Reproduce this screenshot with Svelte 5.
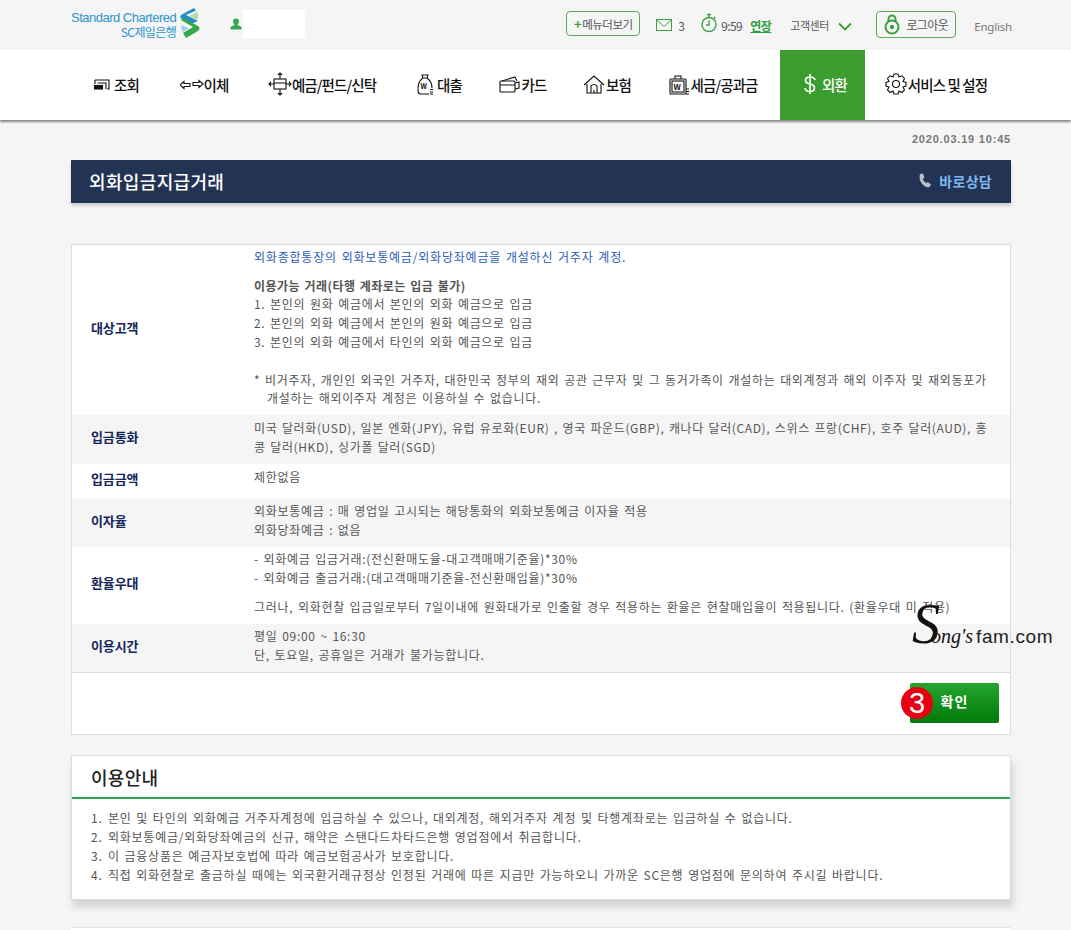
<script>
  const navItems = [
    { label: '조회', icon: 'inquiry' },
    { label: '이체', icon: 'transfer' },
    { label: '예금/펀드/신탁', icon: 'deposit' },
    { label: '대출', icon: 'loan' },
    { label: '카드', icon: 'card' },
    { label: '보험', icon: 'house' },
    { label: '세금/공과금', icon: 'tax' },
    { label: '외환', icon: 'dollar', active: true },
    { label: '서비스 및 설정', icon: 'gear' }
  ];

  const guide = [
    '본인 및 타인의 외화예금 거주자계정에 입금하실 수 있으나, 대외계정, 해외거주자 계정 및 타행계좌로는 입금하실 수 없습니다.',
    '외화보통예금/외화당좌예금의 신규, 해약은 스탠다드차타드은행 영업점에서 취급합니다.',
    '이 금융상품은 예금자보호법에 따라 예금보험공사가 보호합니다.',
    '직접 외화현찰로 출금하실 때에는 외국환거래규정상 인정된 거래에 따른 지급만 가능하오니 가까운 SC은행 영업점에 문의하여 주시길 바랍니다.'
  ];
</script>

<div class="page">
  <header class="top">
    <div class="logo">
      <div class="logo-text">
        <span>Standard Chartered</span>
        <span class="logo-kr">SC제일은행</span>
      </div>
      <svg width="20" height="30" viewBox="0 0 20 30">
        <path d="M14 0 L1 7 Q-1 9.5 2 11 L11 16 L18 13 L6 7 L16 2.5 Z" fill="#1f8fc9" />
        <path d="M17 4 L9 8 L17 12 Q20 8 17 4 Z" fill="#b5dca6" />
        <path d="M1 12 L13 19 L3 25 L6 30 L18 23 Q21 20 18 18 L7 12 L3 9.5 Z" fill="#35a94a" />
        <path d="M2 17 L9 20.5 L3 24 Q0 20 2 17 Z" fill="#9fd2ea" />
      </svg>
    </div>
    <svg class="user" width="12" height="12" viewBox="0 0 12 12">
      <circle cx="6" cy="3.5" r="3" fill="#35a94a" />
      <path d="M4.5 5 h3 v2 l4 2 v2.5 h-11 v-2.5 l4 -2 z" fill="#35a94a" />
    </svg>
    <div class="user-name"></div>

    <div class="utils">
      <button class="more"><b>+</b>메뉴더보기</button>
      <svg class="mail" width="16" height="12" viewBox="0 0 16 12" fill="none" stroke="#3d9f45">
        <rect x="0.5" y="0.5" width="15" height="11" />
        <path d="M1 1 L8 7.5 L15 1" />
      </svg>
      <span class="count">3</span>
      <svg class="clock" width="18" height="20" viewBox="0 0 18 20" fill="none" stroke="#3d9f45" stroke-width="1.4">
        <circle cx="9" cy="11.5" r="7" />
        <path d="M9 7.5 V12 H6 M7 1.5 H11 M9 1.5 V4.5 M14 4 L15.5 5.5" />
      </svg>
      <span class="time">9:59</span>
      <span class="extend">연장</span>
      <span class="center">고객센터</span>
      <svg class="chev" width="14" height="9" viewBox="0 0 14 9" fill="none" stroke="#3ba31f" stroke-width="1.8">
        <path d="M1 1.5 L7 7.5 L13 1.5" />
      </svg>
      <button class="logout">
        <svg width="16" height="21" viewBox="0 0 16 21" fill="none" stroke="#3d9f45" stroke-width="2">
          <path d="M4.5 8 V5 a3.5 3.5 0 0 1 7 0 V8" />
          <circle cx="8" cy="13" r="6.5" />
          <circle cx="8" cy="13" r="1.2" fill="#3d9f45" />
        </svg>
        로그아웃
      </button>
      <span class="english">English</span>
    </div>
  </header>

  <nav class="gnb">
    {#each navItems as item}
      <a class="gnb-item" class:active={item.active} href="#top">
        <svg width="24" height="24" viewBox="0 0 24 24" fill="none" stroke="currentColor" stroke-width="1.1">
          {#if item.icon === 'inquiry'}
            <path d="M5 8 H19 V17 H17 M7.5 11 H16 V17" />
            <rect x="4.5" y="13.5" width="8" height="3.5" fill="currentColor" />
            <path d="M5 8 V12" />
          {:else if item.icon === 'transfer'}
            <path d="M0 13 L4 9.5 V11.5 H10 V14.5 H4 V16.5 Z" />
            <path d="M23 12 L19 8.5 V10.5 H13 V13.5 H19 V15.5 Z" />
          {:else if item.icon === 'deposit'}
            <rect x="6" y="7" width="12" height="10" />
            <path d="M6 11 H18 M12 7 V1 M10 3 L12 1 L14 3 M12 17 V23 M10 21 L12 23 L14 21 M6 12 H1 M3 10 L1 12 L3 14 M18 12 H23 M21 10 L23 12 L21 14" />
          {:else if item.icon === 'loan'}
            <path d="M9 3 H15 L14 6 H10 Z" />
            <path d="M10 6 C5 9 5 14 5 19 Q5 22 8 22 H16 M19 16 C19 12 18 9 14 6" />
            <text x="7.5" y="17" font-size="7" font-weight="700" fill="currentColor" stroke="none">W</text>
            <path d="M17 17.5 H20 M17 20 H20 M17 22 H20" />
          {:else if item.icon === 'card'}
            <rect x="2" y="9" width="15" height="11" rx="1" />
            <path d="M2 13 H17 M4 9 L17 5 L19 9 M17 11 L21 10 V16 L17 17" />
          {:else if item.icon === 'house'}
            <path d="M2 13 L12 4 L22 13 M5 12 V21 H19 V12" />
            <path d="M9 21 V14 Q12 11 15 14 V21 M12 18 V21" />
          {:else if item.icon === 'tax'}
            <rect x="3" y="7" width="16" height="15" rx="1" />
            <rect x="5" y="9" width="12" height="11" />
            <path d="M8 7 V4 H14 V7" />
            <text x="6.5" y="17.5" font-size="8" font-weight="700" fill="currentColor" stroke="none">W</text>
            <path d="M19 17 H22 M19 19.5 H22 M19 22 H22" />
          {:else if item.icon === 'dollar'}
            <path d="M17 8 Q16.5 5 12 5 Q7.5 5 7.5 8.5 Q7.5 11 12 12 Q16.5 13 16.5 16 Q16.5 19.5 12 19.5 Q7.5 19.5 7 16 M12 2 V22" stroke-width="1.6" />
          {:else}
            <circle cx="12" cy="12" r="3.5" />
            <path d="M10 2 H14 L15 5 L18 3.8 L20.5 6.5 L19 9.5 L22 10.5 V14 L19 15 L20.5 18 L18 20.5 L15 19 L14 22 H10 L9 19 L6 20.5 L3.5 18 L5 15 L2 14 V10.5 L5 9.5 L3.5 6.5 L6 3.8 L9 5 Z" />
          {/if}
        </svg>
        <span>{item.label}</span>
      </a>
    {/each}
  </nav>

  <main class="content">
    <p class="date">2020.03.19 10:45</p>

    <div class="title-bar">
      <h1>외화입금지급거래</h1>
      <span class="consult">
        <svg width="14" height="15" viewBox="0 0 14 15">
          <path d="M2 1 L5 0.5 L6.5 4.5 L4.8 5.8 Q5.5 8.5 8 10.3 L9.8 9 L13 11.5 L11.5 14 Q7 15 3.5 10 Q0.5 5.5 2 1 Z" fill="#b9c0c9" />
        </svg>
        바로상담
      </span>
    </div>

    <section class="panel">
      <div class="row first">
        <div class="label">대상고객</div>
        <div class="value">
          <p class="blue">외화종합통장의 외화보통예금/외화당좌예금을 개설하신 거주자 계정.</p>
          <p class="sub">이용가능 거래(타행 계좌로는 입금 불가)</p>
          <p>1. 본인의 원화 예금에서 본인의 외화 예금으로 입금</p>
          <p>2. 본인의 외화 예금에서 본인의 원화 예금으로 입금</p>
          <p>3. 본인의 외화 예금에서 타인의 외화 예금으로 입금</p>
          <p class="note">* 비거주자, 개인인 외국인 거주자, 대한민국 정부의 재외 공관 근무자 및 그 동거가족이 개설하는 대외계정과 해외 이주자 및 재외동포가</p>
          <p class="indent">개설하는 해외이주자 계정은 이용하실 수 없습니다.</p>
        </div>
      </div>
      <div class="row gray tall">
        <div class="label">입금통화</div>
        <div class="value">
          <p class="tight">미국 달러화(USD), 일본 엔화(JPY), 유럽 유로화(EUR) , 영국 파운드(GBP), 캐나다 달러(CAD), 스위스 프랑(CHF), 호주 달러(AUD), 홍</p>
          <p class="tight">콩 달러(HKD), 싱가폴 달러(SGD)</p>
        </div>
      </div>
      <div class="row short">
        <div class="label">입금금액</div>
        <div class="value"><p>제한없음</p></div>
      </div>
      <div class="row gray">
        <div class="label">이자율</div>
        <div class="value">
          <p>외화보통예금 : 매 영업일 고시되는 해당통화의 외화보통예금 이자율 적용</p>
          <p>외화당좌예금 : 없음</p>
        </div>
      </div>
      <div class="row rate">
        <div class="label">환율우대</div>
        <div class="value">
          <p>- 외화예금 입금거래:(전신환매도율-대고객매매기준율)*30%</p>
          <p>- 외화예금 출금거래:(대고객매매기준율-전신환매입율)*30%</p>
          <p class="gap">그러나, 외화현찰 입금일로부터 7일이내에 원화대가로 인출할 경우 적용하는 환율은 현찰매입율이 적용됩니다. (환율우대 미 적용)</p>
        </div>
      </div>
      <div class="row gray">
        <div class="label">이용시간</div>
        <div class="value">
          <p>평일 09:00 ~ 16:30</p>
          <p>단, 토요일, 공휴일은 거래가 불가능합니다.</p>
        </div>
      </div>
      <div class="actions">
        <span class="step">3</span>
        <button class="ok">확인</button>
      </div>
    </section>

    <section class="guide">
      <h2>이용안내</h2>
      <ol>
        {#each guide as line, i}
          <li><span class="num">{i + 1}.</span>{line}</li>
        {/each}
      </ol>
    </section>

    <div class="footer-line"></div>
  </main>

  <div class="watermark">
    <i class="sig-s">S</i><i class="sig-rest">ong's</i>
    <span>fam.com</span>
  </div>
</div>

<style>
  :global(body) {
    margin: 0;
    background: #f5f5f5;
  }

  .page {
    position: relative;
    width: 1071px;
    height: 930px;
    overflow: hidden;
    background: #f5f5f5;
    font-family: "Noto Sans CJK KR", "Liberation Sans", sans-serif;
    font-size: 12px;
    color: #555;
  }

  p,
  h1,
  h2,
  ol {
    margin: 0;
    padding: 0;
    font-weight: inherit;
  }

  .top {
    display: flex;
    align-items: center;
    height: 50px;
    padding: 0 59px 0 71px;
    box-sizing: border-box;
  }

  .logo {
    display: flex;
    align-items: center;
    gap: 4px;
    width: 131px;
    height: 50px;
    margin-top: -1px;
    flex: none;
  }

  .logo svg {
    flex: none;
    margin-top: -4px;
  }

  .logo-text {
    display: flex;
    flex-direction: column;
    align-items: flex-end;
    font-family: "Liberation Sans", sans-serif;
    font-size: 13px;
    letter-spacing: -0.5px;
    line-height: 14px;
    color: #2b93cd;
    white-space: nowrap;
  }

  .logo-kr {
    height: 14px;
    font-family: "Noto Sans CJK KR", sans-serif;
    font-size: 12px;
    letter-spacing: -0.6px;
  }

  .user {
    margin: -3px 0 0 28px;
  }

  .user-name {
    width: 62px;
    height: 28px;
    margin: -2px 0 0 1px;
    background: #fff;
  }

  .utils {
    display: flex;
    align-items: center;
    height: 50px;
    margin-left: auto;
    letter-spacing: -0.5px;
    font-size: 11px;
  }

  button {
    font-family: inherit;
    cursor: pointer;
  }

  .more,
  .logout {
    display: flex;
    align-items: center;
    justify-content: center;
    box-sizing: border-box;
    padding: 0;
    background: none;
    border: 1px solid #5fa95f;
    border-radius: 4px;
    color: #555;
    font-size: 11.5px;
    letter-spacing: -0.5px;
  }

  .more {
    width: 74px;
    height: 25px;
    margin-top: -3px;
  }

  .more b {
    color: #3d9f45;
    font-size: 13px;
    margin-right: 1px;
  }

  .mail {
    margin: 0 0 0 16px;
  }

  .count {
    margin-left: 6px;
    width: 8px;
    font-size: 12px;
  }

  .clock {
    margin: -4px 0 0 14px;
  }

  .time {
    margin-left: 3px;
    width: 24px;
    font-size: 12px;
    letter-spacing: -0.6px;
  }

  .extend {
    margin-left: 5px;
    width: 24px;
    color: #2e9e3d;
    font-weight: 700;
    font-size: 12px;
    text-decoration: underline;
  }

  .center {
    margin-left: 16px;
    width: 42px;
  }

  .chev {
    margin: 2px 0 0 6px;
  }

  .logout {
    gap: 6px;
    width: 80px;
    height: 27px;
    margin: -1px 0 0 24px;
    font-size: 12px;
    letter-spacing: -0.6px;
  }

  .english {
    margin: 2px 0 0 18px;
    color: #777;
    font-family: "Noto Sans", sans-serif;
    font-size: 11.5px;
    letter-spacing: -0.2px;
  }

  .gnb {
    display: grid;
    grid-template-columns: 87px 92px 144px 87px 82px 87px 124px 91px 141px;
    height: 70px;
    padding-left: 71px;
    background: #fff;
    box-shadow: 0 2px 2px rgba(0, 0, 0, 0.45);
    position: relative;
  }

  .gnb-item {
    display: flex;
    align-items: center;
    justify-content: center;
    gap: 0;
    padding-bottom: 2px;
    box-sizing: border-box;
    color: #111;
    font-size: 14.5px;
    font-weight: 500;
    letter-spacing: -0.9px;
    text-decoration: none;
    white-space: nowrap;
  }

  .gnb-item svg {
    flex: none;
  }

  .gnb-item.active {
    justify-self: end;
    width: 85px;
    background: #3c9d2f;
    color: #fff;
  }

  .content {
    padding: 0 60px 0 71px;
  }

  .date {
    height: 40px;
    padding-top: 13px;
    box-sizing: border-box;
    text-align: right;
    color: #777;
    font-family: "Liberation Sans", sans-serif;
    font-size: 11px;
    font-weight: 700;
    letter-spacing: 0.8px;
  }

  .title-bar {
    display: flex;
    align-items: center;
    justify-content: space-between;
    height: 43px;
    padding: 0 19px 0 18px;
    background: #233354;
    box-shadow: 0 3px 3px rgba(0, 0, 0, 0.16);
  }

  h1 {
    color: #fff;
    font-size: 18px;
    font-weight: 500;
    letter-spacing: 0.35px;
    padding-bottom: 2px;
  }

  .consult {
    display: flex;
    align-items: center;
    gap: 7px;
    color: #7fb8f0;
    font-size: 14px;
    font-weight: 700;
    letter-spacing: 0.3px;
    padding-bottom: 2px;
  }

  .panel {
    margin-top: 41px;
    background: #fff;
    border: 1px solid #dcdcdc;
  }

  .row {
    display: flex;
    align-items: center;
    box-sizing: border-box;
    height: 48px;
    padding-bottom: 4px;
  }

  .row.first {
    height: 170px;
  }

  .row.tall {
    height: 49px;
  }

  .row.short {
    height: 35px;
  }

  .row.short .value {
    margin-bottom: 4px;
  }

  .row.rate {
    height: 77px;
  }

  .row.gray {
    background: #f5f5f5;
  }

  .label {
    flex: none;
    width: 163px;
    margin-bottom: 2px;
    padding-left: 19px;
    color: #14265a;
    font-size: 13px;
    font-weight: 700;
    letter-spacing: -0.1px;
  }

  .value p {
    line-height: 18.7px;
    white-space: nowrap;
    letter-spacing: 0.7px;
    word-spacing: 1.3px;
    color: #555;
  }

  .value p.blue {
    color: #2d5cb8;
    letter-spacing: 0.8px;
  }

  .value p.tight {
    letter-spacing: 0.62px;
    word-spacing: 1.3px;
  }

  .value p.sub {
    margin-top: 10px;
    font-weight: 700;
    letter-spacing: 0.45px;
  }

  .value p.note {
    margin-top: 19px;
  }

  .value p.indent {
    padding-left: 13px;
  }

  .value p.gap {
    margin-top: 10px;
  }

  .actions {
    display: flex;
    align-items: center;
    justify-content: flex-end;
    position: relative;
    box-sizing: border-box;
    height: 62px;
    padding: 0 11px 2px 0;
    border-top: 1px solid #dcdcdc;
  }

  .ok {
    width: 89px;
    height: 40px;
    padding: 0 0 3px;
    border: 0;
    border-radius: 2px;
    background: linear-gradient(#25a52f, #007a0a);
    color: #fff;
    font-size: 14px;
    font-weight: 700;
    letter-spacing: 1px;
  }

  .step {
    position: absolute;
    right: 77px;
    top: 14px;
    width: 32px;
    height: 32px;
    border-radius: 50%;
    background: #e60012;
    color: #fff;
    font-family: "Liberation Sans", sans-serif;
    font-size: 29px;
    line-height: 32px;
    text-align: center;
    z-index: 1;
  }

  .guide {
    margin-top: 20px;
    height: 145px;
    box-sizing: border-box;
    background: #fff;
    border: 1px solid #dcdcdc;
    box-shadow: 2px 7px 8px rgba(0, 0, 0, 0.15);
  }

  h2 {
    height: 41px;
    padding-left: 19px;
    line-height: 43px;
    color: #222;
    font-size: 18px;
    font-weight: 500;
    letter-spacing: 0.3px;
    border-bottom: 2px solid #2ea84a;
  }

  ol {
    list-style: none;
    padding: 9px 0 0 19px;
  }

  li {
    display: flex;
    line-height: 19px;
    white-space: pre;
    letter-spacing: 0.75px;
    word-spacing: 1.3px;
  }

  .num {
    width: 17px;
    flex: none;
  }

  .footer-line {
    margin-top: 27px;
    height: 10px;
    background: #fff;
    border-top: 1px solid #e4e4e4;
  }

  .watermark {
    position: absolute;
    left: 912px;
    top: 594px;
    height: 70px;
    display: flex;
    align-items: baseline;
    color: #222;
    font-family: "Liberation Sans", sans-serif;
    font-size: 19px;
    white-space: nowrap;
  }

  .watermark i {
    font-family: "Liberation Serif", serif;
    color: #111;
  }

  .sig-s {
    font-size: 56px;
    line-height: 60px;
    font-weight: 400;
  }

  .sig-rest {
    font-size: 20px;
    margin-left: -9px;
  }

  .watermark span {
    margin-left: 3px;
    letter-spacing: 0.6px;
  }
</style>
